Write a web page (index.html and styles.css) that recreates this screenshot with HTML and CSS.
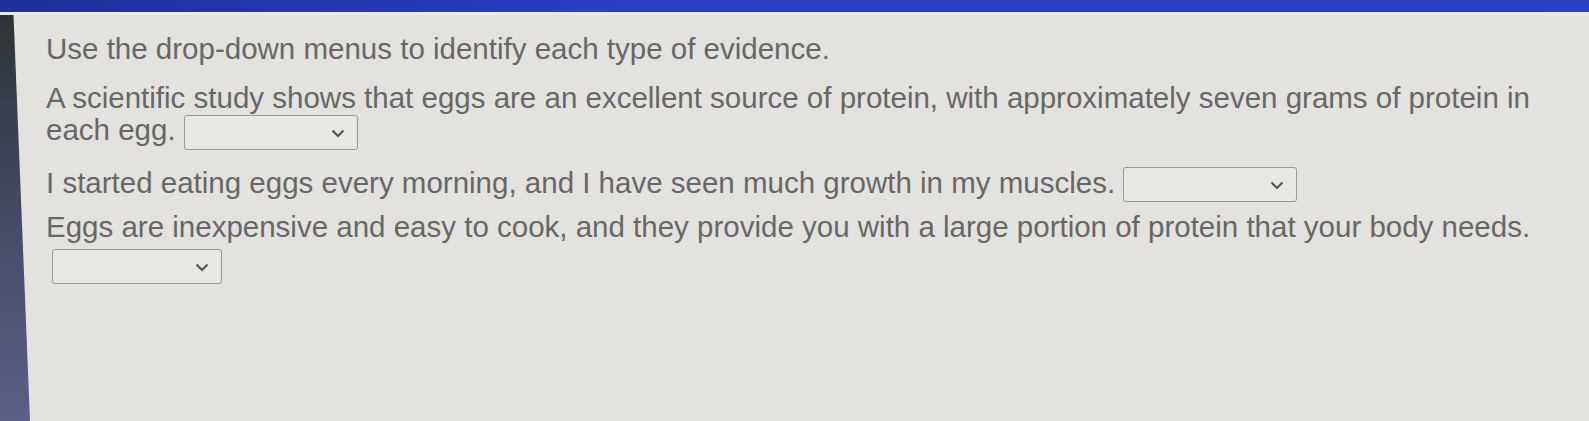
FILE: index.html
```html
<!DOCTYPE html>
<html lang="en">
<head>
    <meta charset="UTF-8" />
    <meta name="viewport" content="width=device-width, initial-scale=1.0" />
    <title>Types of Evidence</title>
    <link rel="stylesheet" href="styles.css">
</head>
<body>

    <div class="topbar"></div>

    <div class="frame">
        <div class="edge"></div>

        <!-- Question -->
        <div class="question">
            <p class="prompt">Use the drop-down menus to identify each type of evidence.</p>

            <p class="item">
                A scientific study shows that eggs are an excellent source of protein, with approximately seven grams of protein in
                each egg.
                <span class="select"><span class="chevron"><svg viewBox="0 0 14 9" width="14" height="9"><path d="M1.5 1.5 L7 7 L12.5 1.5" fill="none" stroke="#555" stroke-width="2.2"/></svg></span></span>
            </p>

            <p class="item tight">
                I started eating eggs every morning, and I have seen much growth in my muscles.
                <span class="select"><span class="chevron"><svg viewBox="0 0 14 9" width="14" height="9"><path d="M1.5 1.5 L7 7 L12.5 1.5" fill="none" stroke="#555" stroke-width="2.2"/></svg></span></span>
            </p>

            <p class="item">
                Eggs are inexpensive and easy to cook, and they provide you with a large portion of protein that your body needs.
                <span class="select below"><span class="chevron"><svg viewBox="0 0 14 9" width="14" height="9"><path d="M1.5 1.5 L7 7 L12.5 1.5" fill="none" stroke="#555" stroke-width="2.2"/></svg></span></span>
            </p>
        </div>
    </div>

</body>
</html>
```

FILE: styles.css
```css
body {
    margin: 0;
    font-family: 'Liberation Sans', Arial, sans-serif;
    background-color: #e4e2df;
    height: 100vh;
    overflow: hidden;
    display: flex;
    flex-direction: column;
}

.topbar {
    height: 12px;
    background: linear-gradient(to right, #1f2f9a, #2a3fc4 40%, #2b40c8);
    flex-shrink: 0;
}

.frame {
    flex: 1;
    display: flex;
    border-top: 3px solid #eceae8;
}

.edge {
    width: 30px;
    flex-shrink: 0;
    background: linear-gradient(to bottom, #2e3436, #4a4f6e 60%, #5c5f86);
    clip-path: polygon(0 0, 45% 0, 100% 100%, 0 100%);
}

.question {
    width: 1526px;
    padding: 18px 0 0 16px;
    color: #676767;
    font-size: 29.5px;
}

.question p {
    margin: 0 0 17px 0;
    line-height: 32px;
}

.question p.tight {
    margin-bottom: 9px;
}

.select {
    display: inline-block;
    vertical-align: middle;
    width: 174px;
    height: 35px;
    box-sizing: border-box;
    border: 1px solid #999999;
    border-radius: 3px;
    background: #e9e7e4;
    position: relative;
    margin-left: 0;
}

.select.below {
    display: block;
    margin: 6px 0 0 6px;
    width: 170px;
}

.chevron {
    position: absolute;
    right: 12px;
    top: 12px;
    line-height: 0;
}
```
